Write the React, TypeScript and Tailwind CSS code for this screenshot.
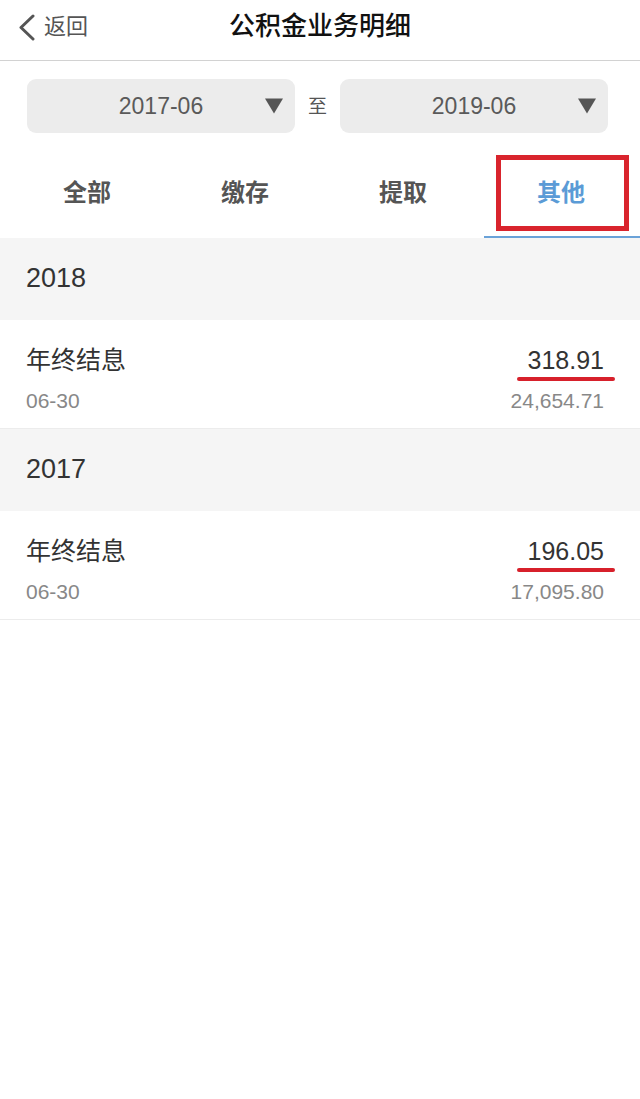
import React from 'react';

const font = { fontFamily: '"Liberation Sans", "Noto Sans CJK SC", sans-serif' };

const groups = [
  { year: '2018', items: [{ name: '年终结息', date: '06-30', amount: '318.91', balance: '24,654.71' }] },
  { year: '2017', items: [{ name: '年终结息', date: '06-30', amount: '196.05', balance: '17,095.80' }] },
];

const tabs = ['全部', '缴存', '提取', '其他'];

const DateBox = ({ value }: { value: string }) => (
  <div className="relative flex h-[54px] flex-1 items-center justify-center rounded-[9px] bg-[#ececec]">
    <span className="text-[23px] leading-none text-[#5a5a5a]">{value}</span>
    <span className="absolute right-[11px] top-1/2 -translate-y-1/2">
      <svg width="20" height="17" viewBox="0 0 20 17">
        <path d="M1 1 H19 L10 16 Z" fill="#555" />
      </svg>
    </span>
  </div>
);

export default function App() {
  return (
    <div className="min-h-[1099px] w-[640px] bg-white" style={font}>
      {/* header */}
      <div className="relative flex h-[61px] items-center justify-center border-b border-[#d2d2d2]">
        <div className="absolute left-[18px] top-0 flex h-full items-center gap-[8px] pb-[6px]">
          <svg width="18" height="27" viewBox="0 0 18 27">
            <path d="M15 2 L3 13.5 L15 25" fill="none" stroke="#555" strokeWidth="3" strokeLinecap="round" strokeLinejoin="round" />
          </svg>
          <span className="text-[22px] leading-none text-[#555]">返回</span>
        </div>
        <h1 className="pb-[8px] text-[26px] font-medium leading-none text-[#111]">公积金业务明细</h1>
      </div>

      {/* date range */}
      <div className="flex items-center gap-[13px] pl-[27px] pr-[32px] pt-[18px] pb-[22px]">
        <DateBox value="2017-06" />
        <span className="text-[19px] leading-none text-[#555]">至</span>
        <DateBox value="2019-06" />
      </div>

      {/* tabs */}
      <div className="grid h-[83px] grid-cols-4 pl-[8px]">
        {tabs.map((t, i) => (
          <div key={t} className="relative flex items-center justify-center pb-[7px]">
            <span className={`text-[24px] font-bold leading-none ${i === 3 ? 'text-[#5b9bd6]' : 'text-[#555]'}`}>{t}</span>
            {i === 3 && (
              <>
                <div className="absolute left-[14px] top-0 h-[76px] w-[133px] border-[5px] border-[#d9242d]" />
                <div className="absolute bottom-0 left-[2px] right-0 h-[2px] bg-[#6aa2d8]" />
              </>
            )}
          </div>
        ))}
      </div>

      {/* list */}
      {groups.map((g) => (
        <div key={g.year}>
          <div className="flex h-[82px] items-center bg-[#f5f5f5] pl-[26px] pb-[2px]">
            <span className="text-[27px] font-medium leading-none text-[#333]">{g.year}</span>
          </div>
          {g.items.map((it, idx) => (
            <div key={idx} className="flex h-[109px] items-stretch justify-between border-b border-[#ececec] px-[26px] pt-[28px]">
              <div className="flex flex-col">
                <span className="text-[25px] leading-none text-[#333]">{it.name}</span>
                <span className="mt-[17px] text-[21px] leading-none text-[#888]">{it.date}</span>
              </div>
              <div className="flex flex-col items-end pr-[10px]">
                <span className="relative text-[25px] leading-none text-[#333]">
                  {it.amount}
                  <span className="absolute -bottom-[8px] -left-[11px] -right-[11px] h-[4px] rounded-full bg-[#d7202b]" />
                </span>
                <span className="mt-[17px] text-[21px] leading-none text-[#888]">{it.balance}</span>
              </div>
            </div>
          ))}
        </div>
      ))}
    </div>
  );
}
